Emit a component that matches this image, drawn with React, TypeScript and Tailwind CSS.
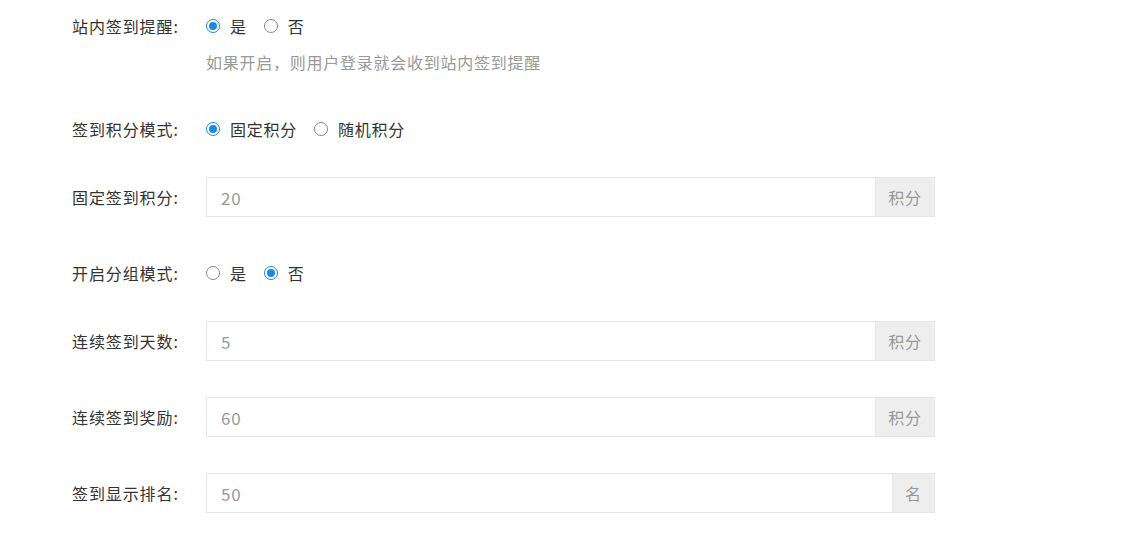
import { useState } from "react";

type Option = { label: string; value: string };

function RadioGroup({ options, value, onChange }: { options: Option[]; value: string; onChange: (v: string) => void }) {
  return (
    <div className="flex items-center">
      {options.map((opt) => {
        const checked = opt.value === value;
        return (
          <label key={opt.value} className="flex items-center mr-[17px] cursor-pointer" onClick={() => onChange(opt.value)}>
            <span
              className={`w-[14px] h-[14px] rounded-full border flex items-center justify-center bg-white ${
                checked ? "border-[#1e88e5]" : "border-[#8a8a8a]"
              }`}
            >
              {checked && <span className="w-[8px] h-[8px] rounded-full bg-[#1e88e5]" />}
            </span>
            <span className="ml-[10px] text-[16px] text-[#333]">{opt.label}</span>
          </label>
        );
      })}
    </div>
  );
}

function Row({ label, children, radio }: { label: string; children: React.ReactNode; radio?: boolean }) {
  return (
    <div className={`flex items-center h-10 ${radio ? "mb-7" : "mb-9"}`}>
      <div className="w-[134px] shrink-0 text-[16px] text-[#333] tracking-[0.9px]">{label}</div>
      {children}
    </div>
  );
}

function AddonInput({ value, addon, addonWidth }: { value: string; addon: string; addonWidth: string }) {
  return (
    <div className="flex h-10 w-[729px]">
      <input
        defaultValue={value}
        className="flex-1 min-w-0 h-10 border border-[#e6e6e6] px-[14px] text-[17px] tracking-[0.8px] text-[#999] outline-none"
      />
      <div className={`${addonWidth} h-10 flex items-center justify-center bg-[#eeeeee] border border-l-0 border-[#e6e6e6] text-[16px] text-[#999]`}>
        {addon}
      </div>
    </div>
  );
}

export default function App() {
  const [remind, setRemind] = useState("yes");
  const [mode, setMode] = useState("fixed");
  const [group, setGroup] = useState("no");

  const yesNo = [
    { label: "是", value: "yes" },
    { label: "否", value: "no" },
  ];

  return (
    <div
      className="min-h-[541px] bg-white pl-[72px] pt-[6px] tracking-[0.75px]"
      style={{ fontFamily: '"Noto Sans CJK SC", "Microsoft YaHei", sans-serif' }}
    >
      {/* 站内签到提醒 */}
      <div className="flex items-center h-10">
        <div className="w-[134px] shrink-0 text-[16px] text-[#333] tracking-[0.9px]">站内签到提醒:</div>
        <RadioGroup options={yesNo} value={remind} onChange={setRemind} />
      </div>
      <div className="ml-[134px] mt-1 mb-[35px] h-6 leading-6 text-[16px] text-[#999]">如果开启，则用户登录就会收到站内签到提醒</div>

      <Row label="签到积分模式:" radio>
        <RadioGroup
          options={[
            { label: "固定积分", value: "fixed" },
            { label: "随机积分", value: "random" },
          ]}
          value={mode}
          onChange={setMode}
        />
      </Row>

      <Row label="固定签到积分:">
        <AddonInput value="20" addon="积分" addonWidth="w-[59px]" />
      </Row>

      <Row label="开启分组模式:" radio>
        <RadioGroup options={yesNo} value={group} onChange={setGroup} />
      </Row>

      <Row label="连续签到天数:">
        <AddonInput value="5" addon="积分" addonWidth="w-[59px]" />
      </Row>

      <Row label="连续签到奖励:">
        <AddonInput value="60" addon="积分" addonWidth="w-[59px]" />
      </Row>

      <Row label="签到显示排名:">
        <AddonInput value="50" addon="名" addonWidth="w-[42px]" />
      </Row>
    </div>
  );
}
